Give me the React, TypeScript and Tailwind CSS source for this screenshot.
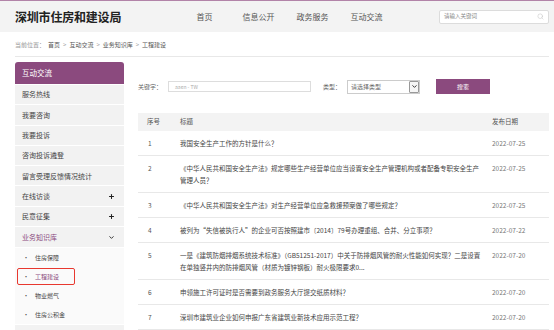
import { ChevronDown, Plus, Search } from 'lucide-react';

const menu = [
  { name: '服务热线' },
  { name: '我要咨询' },
  { name: '我要投诉' },
  { name: '咨询投诉遴登' },
  { name: '留言受理反馈情况统计' },
  { name: '在线访谈', icon: 'plus' },
  { name: '民意征集', icon: 'plus' },
];

const subMenu = ['住房保障', '工程建设', '物业燃气', '住房公积金'];

const rows = [
  { no: 1, title: '我国安全生产工作的方针是什么？', date: '2022-07-25' },
  {
    no: 2,
    title: '《中华人民共和国安全生产法》规定哪些生产经营单位应当设置安全生产管理机构或者配备专职安全生产管理人员？',
    date: '2022-07-25',
  },
  { no: 3, title: '《中华人民共和国安全生产法》对生产经营单位应急救援预案做了哪些规定？', date: '2022-07-25' },
  { no: 4, title: '被列为“失信被执行人”的企业可否按照建市〔2014〕79号办理重组、合并、分立事项？', date: '2022-07-22' },
  {
    no: 5,
    title: '一是《建筑防烟排烟系统技术标准》（GB51251-2017）中关于防排烟风管的耐火性能如何实现？二是设置在单独竖井内的防排烟风管（材质为镀锌钢板）耐火极限要求0...',
    date: '2022-07-20',
  },
  { no: 6, title: '申领施工许可证时是否需要到政务服务大厅提交纸质材料？', date: '2022-07-20' },
  { no: 7, title: '深圳市建筑业企业如何申报广东省建筑业新技术应用示范工程？', date: '2022-07-20' },
];

const nav = ['首页', '信息公开', '政务服务', '互动交流'];

export default function App() {
  return (
    <div className="w-[554px] h-[330px] overflow-hidden bg-white text-[#333] font-['Noto_Sans_CJK_SC','Noto_Sans',sans-serif]">
      {/* header */}
      <div className="border-t border-[#b283a8] bg-[#f3f3f3]">
        <div className="flex items-center h-[31px] pl-[15px] pr-[5px]">
          <div className="w-[162.5px] text-[12px] font-bold text-[#222] tracking-[-0.2px]">深圳市住房和建设局</div>
          <div className="flex">
            {nav.map((n) => (
              <div key={n} className="w-[54px] text-center text-[8px] text-[#555]">
                {n}
              </div>
            ))}
          </div>
          <div className="ml-auto flex items-center w-[110px] h-[14px] bg-white border border-[#dcdcdc] rounded-[2px] px-[4px]">
            <span className="flex-1 text-[5.5px] text-[#888]">请输入关键词</span>
            <Search className="w-[7px] h-[7px] text-[#bbb]" strokeWidth={1.5} />
          </div>
        </div>
      </div>

      {/* breadcrumb */}
      <div className="ml-[15px] mr-[5px] h-[25px] flex items-center border-b border-[#e8e8e8] text-[6px] text-[#999]">
        <span>当前位置：</span>
        <span className="ml-[3px] text-[#555]">首页</span>
        <span className="mx-[3px]">&gt;</span>
        <span className="text-[#555]">互动交流</span>
        <span className="mx-[3px]">&gt;</span>
        <span className="text-[#555]">业务知识库</span>
        <span className="mx-[3px]">&gt;</span>
        <span className="text-[#555]">工程建设</span>
      </div>

      <div className="flex pl-[15px] pr-[5px] pt-[5px]">
        {/* sidebar */}
        <div className="w-[109px] shrink-0 flex flex-col gap-[1px] bg-white">
          <div className="h-[22px] flex items-center pl-[7px] bg-[#8b4a7e] rounded-t-[3px] text-[7.5px] text-white">
            互动交流
          </div>
          {menu.map((m) => (
            <div
              key={m.name}
              className="h-[19.3px] flex items-center justify-between pl-[7px] pr-[9px] bg-[#f2f2f2] text-[7px] text-[#444]"
            >
              <span>{m.name}</span>
              {m.icon === 'plus' && <Plus className="w-[7px] h-[7px] text-[#222]" strokeWidth={3.5} />}
            </div>
          ))}
          <div className="h-[20px] flex items-center justify-between pl-[7px] pr-[9px] bg-[#f2f2f2] text-[7px] text-[#8b4a7e]">
            <span>业务知识库</span>
            <ChevronDown className="w-[7px] h-[7px] text-[#222]" strokeWidth={3} />
          </div>
          <div className="flex flex-col bg-[#fafafa]">
            {subMenu.map((s) => (
              <div key={s} className="h-[19px] flex items-center pl-[2px] text-[6px]">
                {s === '工程建设' ? (
                  <div className="flex items-center h-[17px] w-[58px] border border-[#e8382f] rounded-[2px] pl-[5px] text-[#8b4a7e]">
                    <span className="mr-[6px] text-[#444]">•</span>
                    <span>{s}</span>
                  </div>
                ) : (
                  <div className="flex items-center pl-[6px] text-[#444]">
                    <span className="mr-[6px]">•</span>
                    <span>{s}</span>
                  </div>
                )}
              </div>
            ))}
          </div>
          <div className="h-[20px] bg-[#f2f2f2]" />
        </div>

        {/* main */}
        <div className="flex-1 ml-[14px]">
          <div className="flex items-center mt-[17px] h-[15px] text-[6px] text-[#666]">
            <span className="w-[30px]">关键字：</span>
            <div className="w-[143px] h-[11px] border border-[#ddd] flex items-center pl-[6px] text-[5px] text-[#aaa]">
              aaen - TW
            </div>
            <span className="ml-[12px] w-[24px]">类型：</span>
            <div className="w-[73px] h-[14px] border border-[#ccc] flex items-center pl-[3px] text-[6px] text-[#666]">
              <span className="flex-1">请选择类型</span>
              <div className="w-[10px] h-[12px] border border-[#999] rounded-[1px] flex items-center justify-center bg-[#f6f6f6]">
                <ChevronDown className="w-[7px] h-[7px] text-[#222]" strokeWidth={3} />
              </div>
            </div>
            <div className="ml-[16px] w-[54px] h-[15px] bg-[#8b4a7e] flex items-center justify-center text-[6px] text-white">
              搜索
            </div>
          </div>

          <div className="mt-[19px]">
            <div className="h-[18px] flex items-center bg-[#f3f3f3] text-[6.5px] text-[#555]">
              <span className="w-[42px] pl-[9px]">序号</span>
              <span className="w-[312px]">标题</span>
              <span>发布日期</span>
            </div>
            {rows.map((r) => (
              <div key={r.no} className="flex items-start py-[6px] border-b border-[#e8e8e8] text-[6.5px] leading-[12px]">
                <span className="w-[42px] shrink-0 pl-[10px] text-[#555]">{r.no}</span>
                <span className="w-[302px] shrink-0 text-[#444]">{r.title}</span>
                <span className="ml-[10px] text-[#777]">{r.date}</span>
              </div>
            ))}
          </div>
        </div>
      </div>
    </div>
  );
}
